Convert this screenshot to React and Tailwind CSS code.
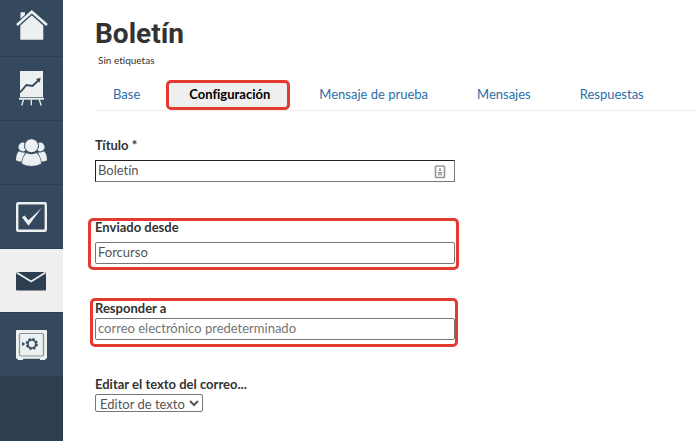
import React from 'react';
import clsx from 'clsx';

const HomeIcon = () => (
    <svg viewBox="0 0 32 36" className="w-8 h-9" fill="#ecf0f1" aria-hidden="true">
        <path d="M4.5 5.2h4.4v5L4.5 13z" />
        <path d="M15.8 8.2 27.3 18.5v14.2H4.3V18.5z" />
        <path d="M1 18 15.8 4.8 31 18" fill="none" stroke="#34495e" strokeWidth="4.6" />
        <path d="M1 18 15.8 4.8 31 18" fill="none" stroke="#ecf0f1" strokeWidth="2.6" />
    </svg>
);

const ChartIcon = () => (
    <svg viewBox="0 0 32 36" className="w-8 h-9" fill="none" aria-hidden="true">
        <path d="M4 0h23v26H4z" fill="#ecf0f1" />
        <path d="M3 26.7h25v2H3z" fill="#ecf0f1" />
        <path d="M7.5 28.5 5.7 34.5M15.3 28.5v5.7M23.2 28.5l2 6" stroke="#ecf0f1" strokeWidth="1.3" />
        <path d="M4 21.5 10.5 14l6 1 6-5.8" stroke="#34495e" strokeWidth="1.9" />
        <path d="m20 8 4.7-1.2-.9 4.8z" fill="#34495e" />
    </svg>
);

const PeopleIcon = () => (
    <svg viewBox="0 0 32 36" className="w-8 h-9" fill="#ecf0f1" aria-hidden="true">
        <circle cx="6.8" cy="12" r="4.4" />
        <circle cx="24.2" cy="12" r="4.4" />
        <path d="M3 16.2Q5.8 18 9 17.5L5.5 26.7Q2 26.3 0 25.2 0 19 3 16.2zM28 16.2Q25.2 18 22 17.5l3.5 9.2q3.5-.4 5.5-1.5Q31 19 28 16.2z" />
        <circle cx="15.5" cy="10.7" r="7" stroke="#34495e" strokeWidth="1" />
        <path d="M10.5 17.8q5 2.4 10 0 4.3 3.2 5 11-4.5 2.5-10 2.5t-10-2.5q.7-7.8 5-11z" stroke="#34495e" strokeWidth=".6" />
    </svg>
);

const CheckIcon = () => (
    <svg viewBox="0 0 32 36" className="w-8 h-9" fill="none" aria-hidden="true">
        <rect x="1.2" y="4.2" width="28.6" height="27.6" rx="1" stroke="#ecf0f1" strokeWidth="2.4" />
        <path d="M6 18.3 8.5 16.5l4 4.7L25.7 9 12.5 26.8z" fill="#ecf0f1" />
    </svg>
);

const MailIcon = () => (
    <svg viewBox="0 0 32 36" className="w-8 h-9" fill="none" aria-hidden="true">
        <rect y="9" width="30" height="18.5" rx="1" fill="#2c3e50" />
        <path d="M.5 9.5 15.2 18.5 29.5 9.5" stroke="#efefef" strokeWidth="1.7" />
    </svg>
);

const SafeIcon = () => (
    <svg viewBox="0 0 32 36" className="w-8 h-9" fill="none" aria-hidden="true">
        <rect y="3" width="31" height="28.7" rx="1" fill="#ecf0f1" />
        <path d="M1 31h6v2H2zM24 31h6l-1 2h-5z" fill="#ecf0f1" />
        <rect x="3.5" y="6.5" width="24" height="22.5" rx="1.5" stroke="#8392a0" strokeWidth="1.2" />
        <circle cx="15.8" cy="17" r="4" stroke="#34495e" strokeWidth="1.7" />
        <circle cx="15.8" cy="17" r="5.2" stroke="#34495e" strokeWidth="1.7" strokeDasharray="2.4 1.684" />
        <path d="M6.2 14.7 9.2 17l-3 2.3z" fill="#34495e" />
    </svg>
);

const navItems = [
    { label: 'Inicio', icon: HomeIcon },
    { label: 'Estadísticas', icon: ChartIcon },
    { label: 'Personas', icon: PeopleIcon },
    { label: 'Acciones', icon: CheckIcon },
    { label: 'Correo', icon: MailIcon, active: true },
    { label: 'Finanzas', icon: SafeIcon },
];

const tabs = ['Base', 'Configuración', 'Mensaje de prueba', 'Mensajes', 'Respuestas'];

const Sidebar = () => (
    <nav className="w-[63px] shrink-0 overflow-hidden bg-[#2c3e50]">
        <ul className="-mt-[7px]">
            {navItems.map(({ label, icon: Icon, active }) => (
                <li key={label}>
                    <a
                        href="#"
                        aria-label={label}
                        className={clsx('block h-16 pl-4 pt-3.5 border-b border-[#2c3e50]', active ? 'bg-[#efefef]' : 'bg-[#34495e]')}
                    >
                        <Icon />
                    </a>
                </li>
            ))}
        </ul>
    </nav>
);

// Red frame drawn over the parts being pointed out
const Highlight = ({ className }) => (
    <span className={clsx('absolute pointer-events-none border-3 border-[#e53a32] rounded-[5px]', className)} />
);

const inputStyle = 'block w-full h-[22px] px-0.5 pb-0.5 border bg-white text-[#555] text-[13px] leading-4 outline-none placeholder:text-[#757575]';

const App = () => {
    return (
        <div className="flex min-h-screen bg-white font-['Lato',sans-serif] text-[13px] leading-4 text-[#333] [font-variant-ligatures:none]">
            <Sidebar />
            <main className="flex-1 min-w-0 pl-8 pt-4">
                <h1 className="font-['Roboto',sans-serif] text-[28px] leading-9 font-bold">Boletín</h1>
                <p className="pl-[3px] text-[10px] leading-4">Sin etiquetas</p>

                <ul className="flex gap-[13px] mt-3 h-[31px] border-b border-[#eee] whitespace-nowrap">
                    {tabs.map((tab) => {
                        const active = tab === 'Configuración';
                        return (
                            <li key={tab} className="relative">
                                <a
                                    href="#"
                                    className={clsx('block h-[30px] px-[18px] pt-1.5', active ? 'bg-[#efefef] font-bold text-black' : 'text-[#2a6ea8]')}
                                >
                                    {tab}
                                </a>
                                {active && <Highlight className="-left-[5px] -right-0.5 top-0 bottom-0" />}
                            </li>
                        );
                    })}
                </ul>

                <form className="w-[360px] max-w-full pt-[26px]">
                    <div className="relative">
                        <label htmlFor="title" className="block h-[23px] font-bold">Título *</label>
                        <input id="title" defaultValue="Boletín" className={clsx(inputStyle, 'border-[#222] border-b-[#767676] border-r-[#767676]')} />
                        <svg viewBox="0 0 12 14" className="absolute right-[9px] bottom-[3px] w-3 h-3.5" fill="none" aria-hidden="true">
                            <rect x="1.5" y="1" width="9" height="11.5" rx="1" stroke="#999" strokeWidth="1.7" />
                            <path d="M5 3.5h2v2.3H5zM4 7h4v1.5H4zM4 9.3h4v1H4z" fill="#888" />
                        </svg>
                    </div>

                    <div className="relative mt-[37px]">
                        <label htmlFor="sender" className="block h-[23px] font-bold">Enviado desde</label>
                        <input id="sender" defaultValue="Forcurso" className={clsx(inputStyle, 'border-[#767676] rounded-xs')} />
                        <Highlight className="-left-[7px] -right-1 -top-px -bottom-1.5" />
                    </div>

                    <div className="relative mt-9">
                        <label htmlFor="reply" className="block h-[18px] font-bold">Responder a</label>
                        <input id="reply" placeholder="correo electrónico predeterminado" className={clsx(inputStyle, 'border-[#767676] rounded-xs')} />
                        <Highlight className="-left-[5px] -right-[3px] -top-0.5 -bottom-[7px]" />
                    </div>

                    <div className="mt-9">
                        <label htmlFor="editor" className="block h-[18px] font-bold">Editar el texto del correo...</label>
                        <select id="editor" className="block h-[18px] border border-[#767676] rounded-xs bg-white text-[13px] text-[#555]">
                            <option>Editor de texto</option>
                        </select>
                    </div>
                </form>
            </main>
        </div>
    );
};

export default App;
